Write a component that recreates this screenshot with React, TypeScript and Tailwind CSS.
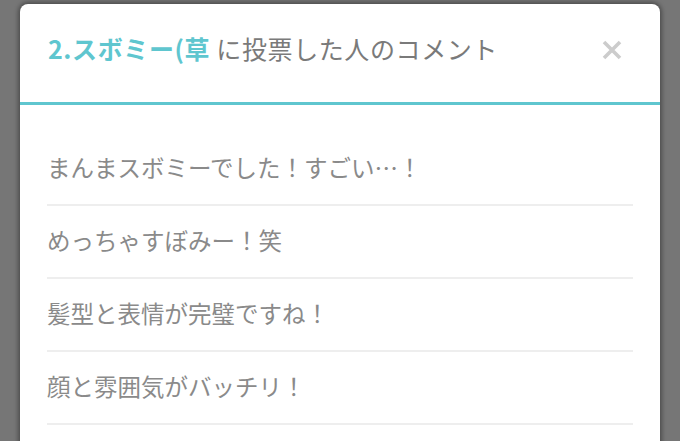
import React from "react";

const comments = [
  "まんまスボミーでした！すごい…！",
  "めっちゃすぼみー！笑",
  "髪型と表情が完璧ですね！",
  "顔と雰囲気がバッチリ！",
];

export default function App() {
  return (
    <div
      className="w-[680px] h-[441px] overflow-hidden bg-[#767676] pt-[4px] px-[20px]"
      style={{ fontFamily: '"Noto Sans CJK JP", "Noto Sans", sans-serif' }}
    >
      <div className="w-[640px] h-[600px] bg-white rounded-t-[8px] shadow-[0_0_4px_2px_rgba(0,0,0,0.35)]">
        <div className="h-[101px] flex items-start pt-[32px] pl-[28px] pr-[38px] border-b-[3px] border-[#5fc6cf]">
          <div className="flex-1 text-[25px] leading-[25px] tracking-[0.6px]">
            <span className="font-bold text-[#5fc6cf]">2.スボミー(草</span>
            <span className="text-[#7a7a7a]"> に投票した人のコメント</span>
          </div>
          <svg width="22" height="22" viewBox="0 0 22 22" className="mt-[3px] -mr-[1px]">
            <path d="M3 3 L19 19 M19 3 L3 19" stroke="#cccccc" strokeWidth="3.6" strokeLinecap="butt" />
          </svg>
        </div>
        <div className="pt-[28px] px-[27px]">
          {comments.map((c) => (
            <div
              key={c}
              className="h-[73px] flex items-center border-b-2 border-[#eeeeee] text-[23.5px] text-[#8a8a8a] pb-[2px]"
            >
              {c}
            </div>
          ))}
        </div>
      </div>
    </div>
  );
}
